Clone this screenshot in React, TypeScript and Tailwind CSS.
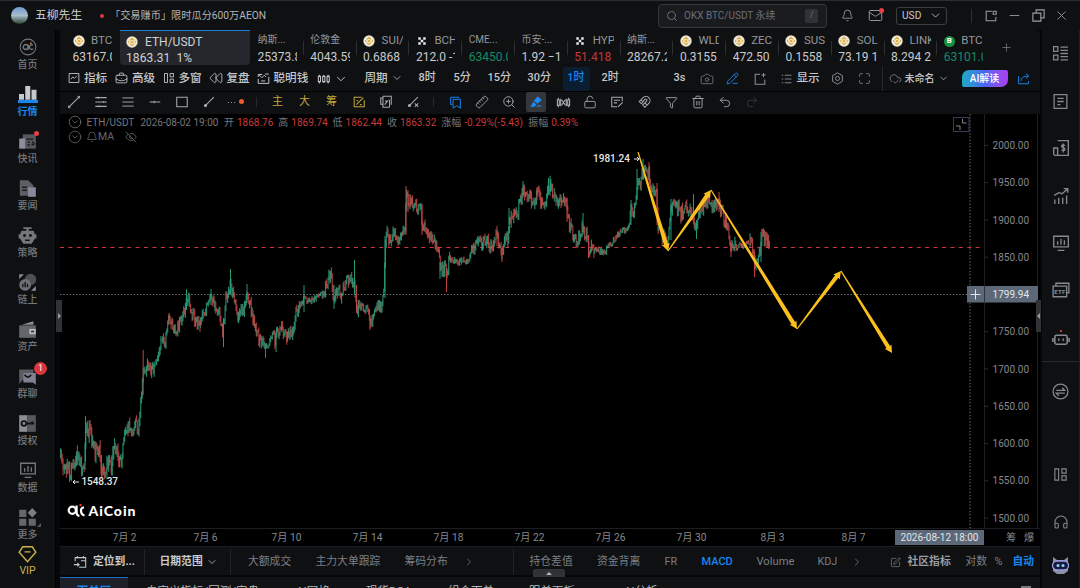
import { ReactNode } from "react";
import {
    AlignJustify, Bell, BriefcaseBusiness, Camera, ChevronDown, ChevronRight, CircleChevronDown, CloudCheck,
    EyeOff, Funnel, Headphones, LockOpen, Mail, Maximize, Minus, PencilLine, Plus, Redo2,
    Rewind, Ruler, Search, SquarePen, Trash2, Undo2, X, ZoomIn
} from "lucide-react";

// ---------- Chart data ----------

// Path of the price in chart coordinates: [x, y]
const path: number[][] = [
    [60, 457], [64, 462], [68, 470], [70, 476], [73, 462], [77, 457], [80, 459], [82, 468], [84.5, 460], [85.5, 424], [88, 428], [91, 438],
    [93, 450], [96, 450], [99, 448], [101, 465], [104, 470], [108, 460], [111, 465], [114, 450], [116, 447], [118, 458], [121.5, 465],
    [123, 440], [126, 429], [130, 425], [132, 437], [135, 418], [138, 430], [140, 410], [142, 393], [143, 365], [145, 370], [148, 367],
    [152, 370], [156, 362], [159, 348], [162, 335], [165, 342], [168, 320], [173, 328], [178, 326], [183, 320], [186, 298], [190, 305],
    [195, 321], [200, 322], [206, 308], [212, 297], [218, 310], [223, 330], [225, 310], [226, 297], [231, 287], [235, 303], [238, 318],
    [243, 310], [247, 292], [250, 306], [253, 316], [256, 330], [260, 340], [265, 346], [270, 340], [275, 338], [280, 327], [285, 336],
    [290, 332], [294, 335], [295, 316], [300, 308], [303, 296], [308, 302], [315, 298], [320, 295], [325, 292], [328, 277], [331, 276],
    [334, 300], [337, 290], [340, 294], [345, 288], [348, 279], [352, 280], [355, 290], [357, 309], [362, 302], [368, 315], [372, 322],
    [376, 305], [382, 305], [384, 290], [385, 250], [386, 235], [390, 240], [394, 232], [399, 240], [403, 231], [405, 230], [406, 198],
    [411, 202], [416, 204], [421, 206], [422, 228], [428, 232], [434, 240], [438, 255], [442, 270], [445, 270], [447, 274], [449, 260],
    [456, 262], [463, 260], [469, 262], [472, 248], [480, 243], [486, 240], [492, 245], [497, 236], [501, 250], [505, 238], [508, 240],
    [509, 222], [512, 217], [517, 216], [520, 200], [524, 190], [530, 198], [534, 203], [538, 192], [543, 206], [547, 195], [550, 182],
    [553, 195], [556, 198], [562, 202], [566, 203], [569, 225], [574, 236], [578, 238], [583, 229], [587, 236], [589, 248], [592, 250],
    [600, 251], [605, 252], [610, 244], [615, 238], [620, 232], [628, 229], [631, 210], [635, 208], [637, 186], [641, 180], [645, 170],
    [649, 174], [652, 190], [656, 190], [658, 225], [662, 238], [668, 240], [671, 208], [676, 204], [681, 215], [685, 203], [690, 212],
    [695, 226], [700, 212], [708, 200], [712, 206], [718, 203], [723, 215], [728, 228], [731, 245], [738, 247], [745, 245], [750, 241],
    [753, 250], [755, 266], [758, 263], [761, 247], [762, 234], [767, 238], [770, 247]
]

// Long wicks: [x, high, low, rising]
const spikes: number[][] = [
    [85.5, 416, 462, 1], [69.5, 462, 482, 0], [101.5, 455, 478, 0], [143.2, 350, 395, 0], [112, 455, 476, 1], [169, 313, 325, 0],
    [186.5, 289, 310, 1], [200, 320, 332, 0], [211, 289, 305, 1], [223.5, 318, 347, 1], [230.5, 269, 295, 1], [247, 284, 300, 1],
    [265.5, 345, 358, 0], [276, 338, 352, 1], [304, 285, 312, 1], [334, 285, 309, 1], [354.5, 260, 295, 1], [356.5, 285, 313, 0],
    [370, 315, 330, 0], [385, 236, 298, 1], [406, 186, 235, 0], [408, 190, 212, 0], [422, 205, 235, 0], [440, 262, 279, 1],
    [446.5, 268, 292, 0], [497, 226, 246, 0], [502, 248, 262, 0], [509, 208, 225, 1], [523, 181, 195, 1], [537, 187, 200, 0],
    [548.5, 178, 195, 1], [550.5, 179, 192, 1], [567, 198, 222, 0], [583, 213, 235, 1], [588.5, 235, 258, 0], [631, 200, 225, 1],
    [637, 169, 200, 1], [643, 159, 180, 1], [649, 162, 185, 0], [657, 183, 225, 0], [671, 199, 240, 1], [693.5, 194, 215, 1],
    [696.5, 220, 239, 1], [719, 192, 212, 0], [731, 240, 257, 0], [754.5, 252, 277, 0], [761, 232, 262, 1]
]

const buildCandles = () => {
    const candles: any[] = []
    let seed = 77
    const random = () => {
        seed = (seed * 16807) % 2147483647
        return seed / 2147483647
    }
    let part = 0
    let open = path[0][1]

    for (let x = 60.5; x < 769.5; x += 0.844) {
        while (path[part + 1][0] < x) part++
        const [x1, y1] = path[part]
        const [x2, y2] = path[part + 1]
        // quiet markets have smaller candles
        const quiet = (x > 450 && x < 470) || (x > 594 && x < 630) || (x > 735 && x < 750) || (x > 305 && x < 324)
        const swing = quiet ? 6 : x < 120 ? 17 : 12
        const close = y1 + (y2 - y1) * (x - x1) / (x2 - x1) + (random() - 0.5) * swing
        const high = Math.min(open, close) - random() * swing * 0.4
        const low = Math.max(open, close) + random() * swing * 0.4
        candles.push({ x, high, low, up: close < open })
        open = close
    }
    return candles
}

const candles = buildCandles()
const prices = [2000, 1950, 1900, 1850, 1800, 1750, 1700, 1650, 1600, 1550, 1500]
const dates = ["7月 2", "7月 6", "7月 10", "7月 14", "7月 18", "7月 22", "7月 26", "7月 30", "8月 3", "8月 7"]
const arrows = [[638, 152, 668, 251], [668, 251, 711, 190], [711, 190, 797, 329], [797, 329, 841, 271], [841, 271, 892, 353]]

const arrowPoints = ([x1, y1, x2, y2]: number[]) => {
    const length = Math.hypot(x2 - x1, y2 - y1)
    const ux = (x2 - x1) / length
    const uy = (y2 - y1) / length
    const at = (back: number, side: number) => `${x2 - ux * back - uy * side},${y2 - uy * back + ux * side}`
    return [at(length, 0.6), at(7, 2.1), at(7.5, 4), at(0, 0), at(7.5, -4), at(7, -2.1), at(length, -0.6)].join(" ")
}

// ---------- Small pieces ----------

function Svg({ size = 14, children, className = "" }: { size?: number, children: ReactNode, className?: string }) {
    return <svg width={size} height={size} viewBox="0 0 16 16" fill="none" stroke="currentColor" strokeWidth="1.2" className={`shrink-0 ${className}`}>{children}</svg>
}

const Panels = ({ size = 14 }) => <Svg size={size}><path d="M2 2h4v12H2zM9.5 2H14v4.500H9.500zM9.500 9.500H14V14H9.500z" /></Svg>

const CandlesIcon = ({ size = 15 }) => <Svg size={size}><path d="M1.500 5h2.500v6H1.500zM6.500 5H9v6H6.500zM11.500 5H14v6h-2.500zM2.700 3v2M2.700 11v2M7.700 3.500V5M7.700 11v1.500M12.700 3v2M12.700 11v2" /></Svg>

const BoardIcon = ({ size = 18 }) => <Svg size={size}><path d="M1.500 2h13v9.500h-13zM5 14.500h6M5 6.500v3M8 4.500v5M11 5.500v4" /></Svg>

const CoinIcon = ({ type }: { type: string }) => {
    if (type == "okx") return <svg width="12" height="12" viewBox="0 0 12 12" className="shrink-0" fill="#e8e8e8"><path d="M2.300 2.300h2.500v2.500H2.300zM7.200 2.300h2.500v2.500H7.200zM4.750 4.750h2.500v2.500h-2.500zM2.300 7.200h2.500v2.500H2.300zM7.200 7.200h2.500v2.500H7.200z" /></svg>
    if (type == "btc") return <span className="flex size-[11px] shrink-0 items-center justify-center rounded-full bg-[#15943f] text-[8px] font-bold text-white">B</span>
    return <svg width="12" height="12" viewBox="0 0 12 12" className="shrink-0">
        <circle cx="6" cy="6" r="5.700" fill="#ece6d6" />
        <path d="M6 2.300 8 4.300M6 2.300 4 4.300M6 9.700 8 7.700M6 9.700 4 7.700M2.300 6l.8-.8M2.300 6l.8.8M9.700 6l-.8-.8M9.700 6l-.8.8" stroke="#e3ab2f" strokeWidth="1.100" />
        <path d="M6 4.500 7.500 6 6 7.500 4.500 6z" fill="#e3ab2f" />
    </svg>
}

// ---------- Title bar ----------

function TitleBar() {
    return (
        <div className="flex h-[30px] shrink-0 items-center border-t border-[#2a2d31] bg-[#0e1012] text-[#9a9da3]">
            <div className="ml-[11px] size-[17px] rounded-full bg-linear-to-b from-[#6f9bd0] via-[#a9bccb] to-[#2d4634]" />
            <div className="ml-[7px] w-[64px] text-[11.8px] text-[#cfd1d4]">五柳先生</div>
            <div className="ml-[1px] size-[4px] rounded-full bg-[#e0353b]" />
            <div className="ml-[6px] w-[548px] text-[10.2px] text-[#b4b6ba]">「交易赚币」限时瓜分600万AEON</div>
            <div className="flex h-[24px] w-[169px] shrink-0 items-center rounded-[4px] border border-[#34373c] bg-[#191b1f] text-[10px] text-[#6c6f76]">
                <Search size={12} className="ml-[7px]" />
                <span className="ml-[6px] w-[121px]">OKX BTC/USDT 永续</span>
                <span className="flex h-[14px] w-[13px] items-center justify-center rounded-[2px] bg-[#303238] text-[9px]">/</span>
            </div>
            <Bell size={13} strokeWidth={1.6} className="ml-[14px] shrink-0" />
            <div className="relative ml-[14px] shrink-0">
                <Mail size={15} strokeWidth={1.5} />
                <span className="absolute -right-[1px] top-0 size-[5px] rounded-full bg-[#ee3f44]" />
            </div>
            <div className="ml-[13px] flex h-[18px] w-[51px] shrink-0 items-center rounded-[3px] border border-[#3a3d42] text-[10.200px] text-[#c9cbcf]">
                <span className="ml-[5px] w-[27px]">USD</span>
                <ChevronDown size={13} strokeWidth={1.5} />
            </div>
            <div className="ml-[24px] h-[14px] w-px bg-[#2b2d31]" />
            <Svg size={14} className="ml-[12px]"><path d="M9 2.500H2.500v11h11V9M10.500 2.500h3.500V6h-3.500z" /></Svg>
            <Minus size={15} strokeWidth={1.4} className="ml-[9px]" />
            <Svg size={15} className="ml-[9px]"><path d="M2 5.500h8.500V14H2zM5.500 5.500V2H14v8.500h-3.500" /></Svg>
            <X size={15} strokeWidth={1.400} className="ml-[8px]" />
        </div>
    )
}

// ---------- Left menu ----------

const menu = [
    {
        label: "首页", icon: <Svg size={18}><circle cx="8" cy="8" r="7" strokeWidth="0.900" /><circle cx="6" cy="8" r="2.200" /><path d="M8.200 6v4.500M12.500 6.500a2 2 0 1 0 0 3.200" /><circle cx="10.500" cy="4.600" r="0.800" fill="#e5683b" stroke="none" /></Svg>
    },
    {
        label: "行情", active: true, icon: <Svg size={20}><path d="M.8 8h4v4.500H.8zM5.800 1.500h4v11h-4zM10.800 4.500h4v8h-4z" fill="#c6c8cb" stroke="none" /><path d="M0 14h16" stroke="#1b86ee" strokeWidth="2.500" /></Svg>
    },
    {
        label: "快讯", dot: true, icon: <Svg size={19}><path d="M4 2h11v12H4z" fill="#55585d" stroke="none" /><path d="M1 5.500h5V14H1z" fill="#8b8f9c" stroke="none" /><path d="M7 6h6M8 8.500h2M8 11h2M12 8l1.500 2-2 1" stroke="#17191c" /></Svg>
    },
    {
        label: "要闻", icon: <Svg size={19}><path d="M1.500 1h7L13 5.500V14H1.500z" fill="#5c5f63" stroke="none" /><path d="M8.500 7H15v8H8.500z" fill="#858a9a" stroke="none" /><path d="M3.500 7h4M3.500 9.500h4" stroke="#181a1d" /></Svg>
    },
    {
        label: "策略", icon: <Svg size={19}><path d="M4.500 1h7v1.500H9V4h4q1.500 2 1 7l-2.500 4h-7L2 11q-.5-5 1-7h4V2.500H4.500z" fill="#73767a" stroke="none" /><path d="M.5 7h2v3.500h-2zM13.500 7h2v3.500h-2z" fill="#73767a" stroke="none" /><circle cx="5.500" cy="8" r="1.200" fill="#111" stroke="none" /><circle cx="10.500" cy="8" r="1.200" fill="#111" stroke="none" /><path d="M6 12h4" stroke="#111" /></Svg>
    },
    {
        label: "链上", icon: <Svg size={19}><circle cx="10.500" cy="5.500" r="4.800" fill="#4d5054" stroke="none" /><circle cx="6" cy="10" r="5" fill="#6d7074" stroke="none" /><path d="M4 9v3M6 7.500v4.500M8 9v3" stroke="#17191c" /><path d="M1 1h4L1 5zM15 15h-4l4-4z" fill="#8a8d91" stroke="none" /></Svg>
    },
    {
        label: "资产", icon: <Svg size={19}><path d="m3 4 10-3v3z" fill="#8b8e96" stroke="none" /><path d="M1 4.500h14V15H1z" fill="#63666a" stroke="none" /><path d="M9.500 7.500H15V12H9.500z" fill="#b5b7bb" stroke="none" /><path d="M11 9.700h2.500" stroke="#222" /></Svg>
    },
    {
        label: "群聊", badge: true, icon: <Svg size={19}><path d="M1 2h12v9H4l-3 3z" fill="#595c61" stroke="none" /><path d="M4.500 5H15v10l-2.500-2h-8z" fill="#7e8290" stroke="none" /><path d="M5.500 6.500q3 4 5.500 0" stroke="#14161a" strokeWidth="1.500" /></Svg>
    },
    {
        label: "授权", icon: <Svg size={19}><path d="M1 1h7v14H1z" fill="#8b8e94" stroke="none" /><path d="M8 1h7v14H8z" fill="#55585d" stroke="none" /><circle cx="5" cy="8" r="2" stroke="#101214" strokeWidth="1.500" /><path d="M7 8h6.500M12 6v2" stroke="#101214" strokeWidth="1.500" /></Svg>
    },
    { label: "数据", icon: <BoardIcon /> },
    {
        label: "更多", corner: true, icon: <Svg size={19}><path d="M1 1.500h6v6H1zM1 9h6v6H1zM9 9h6v6H9z" fill="#63666a" stroke="none" /><path d="m12 0 3.800 4L12 8 8.200 4z" fill="#7c7f84" stroke="none" /></Svg>
    }
]

function LeftMenu() {
    return (
        <div className="flex w-[56px] shrink-0 flex-col items-center border-r border-black bg-[#0e1012] pt-[7px] text-[#74777c]">
            {
                menu.map((item: any) => {
                    return <div key={item.label} className="relative flex h-[47px] w-full shrink-0 flex-col items-center">
                        <div className="flex h-[20.500px] items-center">{item.icon}</div>
                        <div className={`text-[10px] leading-[14px] ${item.active ? "font-bold text-[#1786f0]" : "font-medium"}`}>{item.label}</div>
                        {item.dot && <span className="absolute left-[34px] top-0 size-[5px] rounded-full bg-[#e63d40]" />}
                        {item.badge && <span className="absolute left-[34px] -top-[4px] flex size-[13px] items-center justify-center rounded-full bg-[#d8383b] text-[9px] text-white">1</span>}
                        {item.corner && <span className="absolute left-[37px] top-[16px] border-b-[4px] border-l-[4px] border-b-[#55585d] border-l-transparent" />}
                    </div>
                })
            }
            <div className="-mt-[9px] flex flex-col items-center text-[#cdb34a]">
                <Svg size={19}><path d="M4 1.500h8L15 6 8 14 1 6zM5.500 5.800h5" /></Svg>
                <span className="text-[10.500px] leading-[13px]">VIP</span>
            </div>
        </div>
    )
}

// ---------- Ticker tabs ----------

const tickers = [
    { name: "纳斯...", price: "25373.8" },
    { name: "伦敦金", price: "4043.59" },
    { name: "SUI/", price: "0.6868", coin: "bnb" },
    { name: "BCH", price: "212.0 -1", coin: "okx" },
    { name: "CME...", price: "63450.0", color: "text-[#188b68]" },
    { name: "币安-...", price: "1.92 −1" },
    { name: "HYP", price: "51.418", coin: "okx", color: "text-[#c93639]" },
    { name: "纳斯...", price: "28267.2" },
    { name: "WLD", price: "0.3155", coin: "bnb" },
    { name: "ZEC", price: "472.50", coin: "bnb" },
    { name: "SUS", price: "0.1558", coin: "bnb" },
    { name: "SOL", price: "73.19 1", coin: "bnb" },
    { name: "LINK", price: "8.294 2", coin: "bnb" },
    { name: "BTC", price: "63101.0", coin: "btc", color: "text-[#188b68]" }
]

function Ticker({ name, price, coin, color }: any) {
    return (
        <div className="w-[39.500px] overflow-hidden whitespace-nowrap">
            <div className={`flex h-[16px] items-center text-[#94979c] ${coin ? "text-[11.500px]" : "-mt-[2px] mb-[2px] text-[10px]"}`}>
                {coin && <CoinIcon type={coin} />}
                <span className={coin ? "ml-[6.500px]" : ""}>{name}</span>
            </div>
            <div className={`text-[12px] leading-[16px] ${color || "text-[#c9cbce]"}`}>{price}</div>
        </div>
    )
}

function Tickers() {
    return (
        <div className="flex h-[36px] shrink-0">
            <div className="w-[60px] shrink-0 pl-[12.500px] pt-[3px]"><Ticker name="BTC" price="63167.0" coin="bnb" /></div>
            <div className="h-[35px] w-[130px] shrink-0 rounded-b-[4px] border-t-[1.500px] border-[#1b7fdc] bg-[#24262b] pl-[6px] pt-[2.500px] text-[12px] text-[#d0d2d5]">
                <div className="flex h-[16px] items-center"><CoinIcon type="bnb" /><span className="ml-[7px]">ETH/USDT</span></div>
                <div className="leading-[16px] tracking-[0.100px]">1863.31&nbsp; 1%</div>
            </div>
            {
                tickers.map((ticker, index) => {
                    return <div key={index} className="flex w-[52.8px] shrink-0 pt-[3px]">
                        <div className={`mr-[6.500px] mt-[8px] h-[14px] w-px ${index ? "bg-[#2b2d31]" : ""}`} />
                        <Ticker {...ticker} />
                    </div>
                })
            }
            <Plus size={13} strokeWidth={1.2} className="ml-[11px] mt-[11px] shrink-0 text-[#8a8d92]" />
        </div>
    )
}

// ---------- Toolbars ----------

function MainToolbar() {
    return (
        <div className="flex h-[26px] shrink-0 items-center whitespace-nowrap border-b border-black pl-[8px] text-[11.600px] font-medium text-[#c4c6c9]">
            <div className="flex w-[47px] items-center gap-[4px]"><Svg size={12}><path d="M1.500 2h13v12h-13zM4 9.500l2.500-3 2 2L12 5" /></Svg>指标</div>
            <div className="flex w-[47.500px] items-center gap-[4px]"><BriefcaseBusiness size={13} strokeWidth={1.600} />高级</div>
            <div className="flex w-[46px] items-center gap-[4px]"><Panels size={12} />多窗</div>
            <div className="flex w-[48px] items-center gap-[4px]"><Rewind size={14} strokeWidth={1.400} />复盘</div>
            <div className="flex w-[60px] items-center gap-[4px]"><Svg size={13}><path d="M1.500 6V3h5M2 3l4 4 3-3 2 2M1.500 8.500V14h13V6M10 2.500h4.500M5 11h5" /></Svg>聪明钱</div>
            <CandlesIcon size={14} />
            <ChevronDown size={14} strokeWidth={1.600} className="ml-[3px] shrink-0" />
            <div className="ml-[17px] flex w-[54px] shrink-0 items-center gap-[3px]">周期<ChevronDown size={12} strokeWidth={1.500} /></div>
            <div className="w-[35px] shrink-0 text-[11px]">8时</div>
            <div className="w-[34px] shrink-0 text-[11px]">5分</div>
            <div className="w-[40px] shrink-0 text-[11px]">15分</div>
            <div className="w-[35px] shrink-0 text-[11px]">30分</div>
            <div className="flex h-[24px] w-[27px] shrink-0 items-center justify-center rounded-[2px] bg-[#0b1d31] text-[11px] text-[#1786f0]">1时</div>
            <div className="ml-[12px] w-[72px] shrink-0 text-[11px]">2时</div>
            <div className="w-[26px] shrink-0 text-[11px]">3s</div>
            <Camera size={14} strokeWidth={1.400} className="mr-[12px] shrink-0 text-[#7c7f84]" />
            <PencilLine size={13} strokeWidth={1.700} className="mr-[14px] shrink-0 text-[#1786f0]" />
            <Svg size={14} className="mr-[14px] text-[#8b8e92]"><path d="M8 2.500H2.500V14h11V8.500M12 1v5M9.500 3.500h5" /></Svg>
            <Svg size={12} className="mr-[4px] text-[#8b8e92]"><path d="M1 3h2M1 8h2M1 13h2M5 3h9M5 8h9M5 13h9" /></Svg>
            <div className="w-[34px] shrink-0">显示</div>
            <Svg size={13} className="mr-[14px] text-[#8b8e92]"><path d="m8 1 6 3.500v7L8 15l-6-3.500v-7z" /><circle cx="8" cy="8" r="2.500" /></Svg>
            <Maximize size={13} strokeWidth={1.500} className="mr-[11px] shrink-0 text-[#8b8e92]" />
            <div className="mr-[6px] h-full w-px shrink-0 bg-[#26282c]" />
            <CloudCheck size={13} strokeWidth={1.400} className="mr-[3px] shrink-0 text-[#8b8e92]" />
            <div className="flex w-[57px] shrink-0 items-center gap-[3px] text-[10px]">未命名<ChevronDown size={11} strokeWidth={1.500} /></div>
            <div className="flex h-[17px] w-[46px] shrink-0 items-center justify-center rounded-tl-[7px] rounded-br-[7px] rounded-tr-[2px] rounded-bl-[2px] bg-linear-to-r from-[#18a9c4] via-[#4a63f2] to-[#ab3cf0] text-[10px] text-white">AI解读</div>
            <Svg size={13} className="ml-[9px] text-[#1786f0]"><path d="M2 5v9.500h12V11M5 11c0-4 3-6 9-6M11 2l3.500 3L11 8" /></Svg>
        </div>
    )
}

const lineTools = [
    <Svg><path d="M3.500 12.500 12.500 3.500" /><circle cx="2.500" cy="13.500" r="1" /><circle cx="13.500" cy="2.500" r="1" /></Svg>,
    <Svg><path d="M1.500 3h13M1.500 8h13M1.500 13h13" /><path d="M5 2v2M11 7v2M6 12v2" /></Svg>,
    <AlignJustify size={14} strokeWidth={1.600} />,
    <Svg><path d="M2 8h12M7 6.500v3" /></Svg>,
    <Svg><path d="M2 2.500h12v11H2z" /></Svg>,
    <Svg><path d="M3 13 13.500 2.500" /><circle cx="4" cy="12" r="1.200" fill="currentColor" /></Svg>,
    <div className="flex items-center gap-[2px]"><i className="size-[1px] bg-[#999]" /><i className="size-[1px] bg-[#999]" /><i className="size-[1px] bg-[#999]" /><i className="-mt-[1px] ml-[2px] size-[5px] rounded-full bg-[#ec5d2b]" /></div>
]

const signalTools = [
    <span className="text-[11px] text-[#c2a63c]">主</span>,
    <span className="text-[11px] text-[#c2a63c]">大</span>,
    <span className="text-[11px] text-[#c2a63c]">筹</span>,
    <Svg className="text-[#c2a63c]"><path d="M14 6v7.500H2.500v-11H11M5 11l8-8M5 6.500h2M9 11h2" /></Svg>,
    <Svg><path d="M4 10.500H2v-7h2M4.500 1.500H14V11M4.500 1.500V14H12M12 14V5.500M6.500 11l4-5M7 7h2" /></Svg>,
    <Svg><path d="M3 13 13.500 2.500M10 9.500l4 4M14 9.500l-4 4" /><circle cx="4" cy="12" r="1.200" fill="currentColor" /></Svg>
]

const editTools = [
    <Svg size={13} className="text-[#1786f0]"><path d="M4 10.500H2v-9h10V3M5 4h9v11l-4.500-3L5 15z" /></Svg>,
    <Ruler size={14} strokeWidth={1.500} className="-scale-x-100" />,
    <ZoomIn size={14} strokeWidth={1.600} />,
    <div className="flex size-[20px] items-center justify-center rounded-[2px] bg-[#34373c] text-[#1b8cf4]"><Svg><path d="m10 1.500 4.500 4.500-5 4L5.500 6.500zM5 7.500 8.500 11l-2 2-5 1z" fill="currentColor" stroke="none" /><path d="M9 13.500q3-3 5 0" /></Svg></div>,
    <Svg size={15}><path d="M1.500 5h2v6h-2zM12.500 5h2v6h-2zM2.500 3v2M2.500 11v2M13.500 3v2M13.500 11v2M5 4v8M11 4v8M6 5l4 6M10 5l-4 6" /></Svg>,
    <LockOpen size={14} strokeWidth={1.500} />,
    <Svg><path d="M14 7V2.500H2v11h6M4.500 6h7M4.500 9H8M9 13.500l5.500-5" /></Svg>,
    <Svg><path d="M2.500 7.500 7 3a4.500 4.500 0 0 1 6.500 6.500L9 14l-2.500-2.500L11 7a1.200 1.200 0 0 0-2-2L5 10zM4.500 5.500 7 8M9 9l2.500 2.500" /></Svg>,
    <Funnel size={13} strokeWidth={1.600} />,
    <Trash2 size={14} strokeWidth={1.600} />,
    <Undo2 size={14} strokeWidth={1.500} />,
    <Redo2 size={14} strokeWidth={1.500} className="text-[#3a3d41]" />
]

function ToolGroup({ tools }: { tools: ReactNode[] }) {
    return <>{tools.map((tool, index) => <div key={index} className="flex w-[27px] shrink-0 items-center justify-center">{tool}</div>)}</>
}

function DrawToolbar() {
    return (
        <div className="flex h-[22px] shrink-0 items-center pb-[2px] text-[#a7a9ad]">
            <ToolGroup tools={lineTools} />
            <div className="mx-[7px] h-[10px] w-px bg-[#26282c]" />
            <ToolGroup tools={signalTools} />
            <div className="ml-[7px] mr-[7.500px] h-[10px] w-px bg-[#26282c]" />
            <ToolGroup tools={editTools} />
        </div>
    )
}

// ---------- Chart ----------

const quote = [
    ["开", "1868.76"], ["高", "1869.74"], ["低", "1862.44"], ["收", "1863.32"]
]

function Chart() {
    return (
        <div className="relative h-[414px] shrink-0 bg-black">
            <svg width="978" height="414" viewBox="60 114 978 414" className="block">
                <path d="M60 247.500H984" stroke="#d0353f" strokeWidth="1.200" strokeDasharray="4 4.400" />
                <path d="M60 294.500H967M970 114V528" stroke="#6a6d72" strokeDasharray="1.500 1.700" />
                <path d="M984.500 114V528M1037.500 114V528" stroke="#1d1f22" />

                {candles.map((c: any, i: number) => <path key={i} d={`M${c.x} ${c.high}V${c.low}`} stroke={c.up ? "#2fab87" : "#d24d4b"} strokeOpacity="0.8" strokeWidth="1.150" />)}
                {spikes.map((s, i) => <path key={i} d={`M${s[0]} ${s[1]}V${s[2]}`} stroke={s[3] ? "#249a77" : "#c24343"} />)}

                {arrows.map((arrow, i) => <polygon key={i} points={arrowPoints(arrow)} fill="#fcc01e" />)}

                <g fontSize="10" fill="#e6e6e6" fontWeight="500">
                    <text x="593" y="162" textLength="37">1981.24</text>
                    <text x="81.500" y="484.500" textLength="36.500">1548.37</text>
                </g>
                <path d="M634 159h5M637 157l2 2-2 2M79 482h-6M75 480l-2 2 2 2" stroke="#e6e6e6" fill="none" />

                {
                    prices.map((price, i) => {
                        const y = 145.400 + i * 37.270
                        return <g key={price}>
                            <path d={`M984 ${y}h4`} stroke="#2c2e32" />
                            {price != 1800 && <text x="992.500" y={y + 3.600} fontSize="10" fill="#85888e" textLength="36.500">{price}.00</text>}
                        </g>
                    })
                }
                <path d="M967 286h71v16.500h-71z" fill="#5c6878" />
                <path d="M984.500 286v16.500" stroke="#2d343e" />
                <path d="M970.500 294.500h10M975.500 289.500v10" stroke="#e2e5e9" />
                <text x="992.500" y="298" fontSize="10" fill="#e2e5e9" textLength="36.500">1799.94</text>

                <path d="M953.500 117.500h15.500v14h-15.500z" stroke="#3c3d5a" fill="none" />
                <path d="M962.500 119v4h4M956 126h4v4" stroke="#85888e" fill="none" />

                {/* Brand */}
                <g fill="none" stroke="#fff" strokeWidth="2.200">
                    <circle cx="72.300" cy="510.300" r="3.600" />
                    <path d="M76.600 505.500v7q0 3 2.800 3.500M84 507.500a2.800 2.800 0 0 0-3 3q0 4 3.500 5" />
                </g>
                <circle cx="80.500" cy="505" r="1.200" fill="#e33d32" />
                <text x="88.500" y="516" fontSize="14" fontWeight="900" fill="#fff" textLength="47" className="font-['Lato']">AiCoin</text>
            </svg>

            {/* Legend */}
            <div className="absolute left-[8px] top-[1px] flex h-[14px] items-center whitespace-nowrap text-[10px] text-[#75787d]">
                <CircleChevronDown size={14} strokeWidth={1.300} />
                <span className="ml-[4.500px] w-[54px]">ETH/USDT</span>
                <span className="w-[83.500px]">2026-08-02 19:00</span>
                {
                    quote.map(([label, value]) => {
                        return <span key={label} className="flex w-[54.300px]"><span className="w-[13px]">{label}</span><span className="text-[#c93a3c]">{value}</span></span>
                    })
                }
                <span className="w-[23px]">涨幅</span>
                <span className="w-[64px] text-[#c93a3c]">-0.29%(-5.43)</span>
                <span className="w-[23px]">振幅</span>
                <span className="text-[#c93a3c]">0.39%</span>
            </div>
            <div className="absolute left-[8px] top-[16px] flex h-[14px] items-center text-[10.500px] text-[#66696e]">
                <CircleChevronDown size={14} strokeWidth={1.300} />
                <Bell size={12} strokeWidth={1.500} className="ml-[4px]" />
                <span className="w-[27px]">MA</span>
                <EyeOff size={12} strokeWidth={1.600} />
            </div>
        </div>
    )
}

function TimeAxis() {
    return (
        <div className="flex h-[19px] shrink-0 items-center border-y border-[#1b1d20] bg-black pl-[24px] text-[10.200px] text-[#85888e]">
            {dates.map((date) => <div key={date} className="w-[81px] shrink-0 text-center">{date}</div>)}
            <div className="ml-[1px] flex h-[15px] w-[89px] shrink-0 items-center justify-center bg-[#5c6878] text-[10px] text-[#e2e5e9]">2026-08-12 18:00</div>
            <div className="ml-[22px] w-[18px] shrink-0">筹</div>
            <div className="shrink-0">爆</div>
        </div>
    )
}

function IndicatorBar() {
    return (
        <div className="relative flex h-[28px] shrink-0 items-center whitespace-nowrap bg-[#0e1012] pl-[13px] pt-[2px] text-[10.800px] text-[#7c7f84]">
            <Svg size={14} className="text-[#c4c6c9]"><path d="M2.500 7V3h12v11H7M5 1v3M12 1v3M1 11h6M5 9l2 2-2 2M9 6.500h5" /></Svg>
            <div className="ml-[6px] w-[51px] shrink-0 font-bold text-[#c9cbce]">定位到...</div>
            <div className="mr-[14.500px] h-full w-px shrink-0 bg-[#222427]" />
            <div className="flex w-[70.500px] shrink-0 items-center gap-[3px] font-bold text-[#c9cbce]">日期范围<ChevronDown size={12} strokeWidth={1.500} /></div>
            <div className="mr-[17px] h-full w-px shrink-0 bg-[#222427]" />
            <div className="w-[67.500px] shrink-0">大额成交</div>
            <div className="w-[89px] shrink-0">主力大单跟踪</div>
            <div className="w-[58px] shrink-0">筹码分布</div>
            <ChevronRight size={12} strokeWidth={1.500} className="shrink-0" />
            <div className="ml-[38.500px] mr-[15.500px] h-full w-px shrink-0 bg-[#222427]" />
            <div className="w-[67.500px] shrink-0">持仓差值</div>
            <div className="w-[67.500px] shrink-0">资金背离</div>
            <div className="w-[37px] shrink-0">FR</div>
            <div className="w-[55px] shrink-0 text-[11px] font-medium text-[#1786f0]">MACD</div>
            <div className="w-[61px] shrink-0 text-[11.200px]">Volume</div>
            <div className="w-[33px] shrink-0">KDJ</div>
            <ChevronRight size={12} strokeWidth={1.500} className="shrink-0" />
            <SquarePen size={11} strokeWidth={1.600} className="ml-[27px] mr-[7px] shrink-0" />
            <div className="w-[58px] shrink-0 font-bold text-[#999ca1]">社区指标</div>
            <div className="w-[29px] shrink-0">对数</div>
            <div className="w-[18px] shrink-0">%</div>
            <div className="shrink-0 font-bold text-[#1786f0]">自动</div>
            <div className="absolute left-[473px] top-[22px] flex h-[8px] w-[32px] items-center justify-center rounded-t-[2px] bg-[#303238]">
                <span className="border-x-[3px] border-b-[3px] border-x-transparent border-b-[#b2b4b8]" />
            </div>
        </div>
    )
}

function BottomTabs() {
    return (
        <div className="mt-[2px] flex h-[11px] shrink-0 items-start overflow-hidden whitespace-nowrap bg-[#101214] text-[11.500px] leading-[16px] text-[#b9bbbf]">
            <div className="h-[30px] w-[68px] shrink-0 border-t border-[#1b6fc0] bg-[#1d2026] pt-[5px] text-center font-bold text-[#1786f0]">下单区</div>
            <div className="ml-[18px] w-[150px] shrink-0 pt-[6px]">自定义指标/回测/实盘</div>
            <div className="w-[70px] shrink-0 pt-[6px]">AI网格</div>
            <div className="w-[82px] shrink-0 pt-[6px]">现货DCA</div>
            <div className="w-[81px] shrink-0 pt-[6px]">组合下单</div>
            <div className="w-[95px] shrink-0 pt-[6px]">跟单面板</div>
            <div className="w-[397px] shrink-0 pt-[6px]">AI分析</div>
            <div className="mt-[9px] h-[2px] w-[10px] bg-[#777a7f]" />
        </div>
    )
}

// ---------- Right menu ----------

const sideTools = [
    <Svg size={17}><path d="M1.500 1.500h4V6h-4zM1.500 9.500h4V14h-4zM8 2h7M8 5h7M8 8h7M8 11h7M8 14h7" /></Svg>,
    <Svg size={17}><path d="M2 1.500h12v13H2zM5 5h6M5 8h6M5 11h3" /></Svg>,
    <Svg size={18}><path d="M5 1.500h9.500v13H3A1.500 1.500 0 0 1 1.500 13V8H5v6M11.500 6c-.5-1-3-1-3 .5s3 1 3 2.500-2.500 1.500-3 .5M10 4v8" /></Svg>,
    <Svg size={18}><path d="M2.500 11v4M6 9.500V15M9.500 9.500V15M13 7.500V15M2 7.500l4-2.500 3 1 4.500-4M10.500 1.500h3.500V5" /></Svg>,
    <BoardIcon size={18} />,
    <Svg size={18}><path d="M1 4.500h12V14H1zM3.500 4.500V2H15v8.500h-2" /><text x="2" y="11.300" fontSize="5.500" fontWeight="800" fill="currentColor" stroke="none" textLength="10">ETF</text></Svg>,
    <Svg size={18}><path d="M4 5.500h8q1.500 0 1.500 2V12q0 1.500-1.500 1.500H4q-1.500 0-1.500-1.500V7.500q0-2 1.500-2zM.8 8v3.500M15.200 8v3.500M6 8.500v2M10 8.500v2" strokeWidth="1.400" /><circle cx="8" cy="1.800" r="1" fill="#dc4a32" stroke="none" /></Svg>
]

function RightMenu() {
    return (
        <div className="flex w-[38px] shrink-0 flex-col items-center border-r border-[#1d1f22] bg-[#0e1012] text-[#85888d]">
            {sideTools.map((tool, index) => <div key={index} className="flex h-[47.350px] shrink-0 items-center">{tool}</div>)}
            <div className="h-px w-full shrink-0 bg-[#26282c]" />
            <div className="mt-[21px]"><Svg size={17}><circle cx="8" cy="8" r="7" /><path d="M4 7h8L9.500 4.500M12 9.500H4L6.500 12" /></Svg></div>
            <div className="mt-[67px]"><Panels size={15} /></div>
            <Headphones size={16} strokeWidth={1.600} className="mt-[32px] shrink-0" />
            <svg width="19" height="19" viewBox="0 0 19 19" className="mt-[26px] shrink-0">
                <path d="M2 1l4 3h7l4-3v14l-4 3H6l-4-3z" fill="#8a8fa3" />
                <rect x="1.500" y="5" width="16" height="9" rx="4.500" fill="#181c3a" stroke="#9c9be8" strokeWidth="1.300" />
                <circle cx="7" cy="9.500" r="1.500" fill="#8ad4ff" />
                <circle cx="12" cy="9.500" r="1.500" fill="#8ad4ff" />
            </svg>
        </div>
    )
}

export default function App() {
    return (
        <div className="relative flex h-[588px] w-[1080px] flex-col overflow-hidden bg-[#050607] font-['Roboto','Noto_Sans_CJK_SC',sans-serif]">
            <TitleBar />
            <div className="flex h-[558px] shrink-0">
                <LeftMenu />
                {/* MIDDLE */}
                <div className="ml-[4px] flex w-[980px] shrink-0 flex-col">
                    <div className="shrink-0 rounded-tr-[4px] bg-[#0e1012]">
                        <Tickers />
                        <MainToolbar />
                        <DrawToolbar />
                    </div>
                    <Chart />
                    <TimeAxis />
                    <IndicatorBar />
                    <BottomTabs />
                </div>
                <div className="w-[2px] shrink-0" />
                <RightMenu />
            </div>

            {/* Panel handles */}
            <div className="absolute left-[56px] top-[300px] flex h-[32px] w-[6px] items-center justify-center bg-[#303236]">
                <span className="border-y-[3px] border-l-[3px] border-y-transparent border-l-[#999ca0]" />
            </div>
            <div className="absolute left-[1036px] top-[300px] flex h-[32px] w-[5px] items-center justify-center bg-[#303236]">
                <span className="border-y-[3px] border-r-[3px] border-y-transparent border-r-[#999ca0]" />
            </div>
        </div>
    )
}
